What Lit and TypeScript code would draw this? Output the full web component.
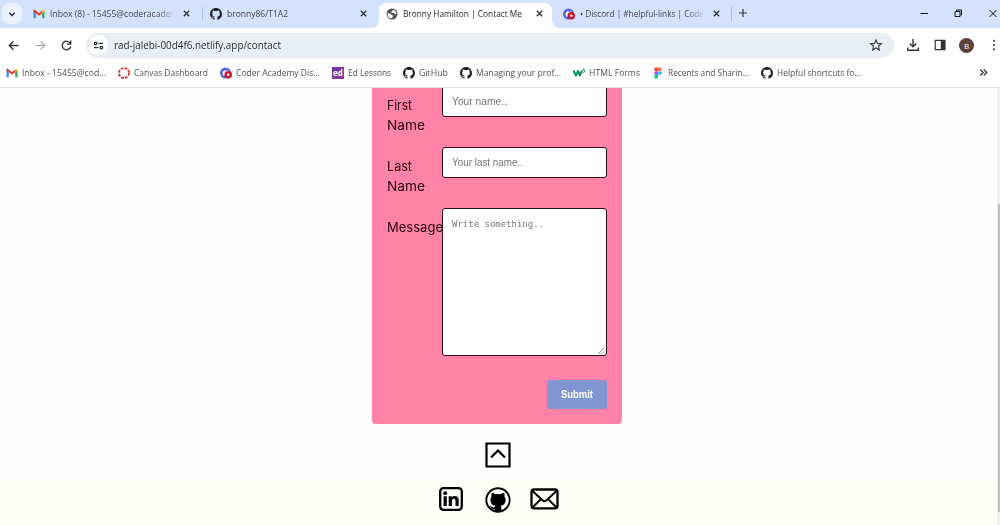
import { LitElement, html, css, svg } from "lit";
import { customElement, property } from "lit/decorators.js";

/** One line of text condensed or widened to a given width. */
@customElement("fit-text")
class FitText extends LitElement {
  @property({ type: Number }) w = 50;
  static styles = css`
    :host { display: block; flex: none; white-space: pre; }
    span { display: inline-block; transform-origin: 0 50%; }
  `;
  firstUpdated() {
    this.fit();
    document.fonts?.ready.then(() => this.fit());
  }
  fit() {
    const s = this.renderRoot.querySelector("span") as HTMLElement;
    this.style.width = `${this.w}px`;
    if (s.offsetWidth) {
      s.style.transform = "none";
      s.style.transform = `scaleX(${this.w / s.getBoundingClientRect().width})`;
    }
  }
  render() {
    return html`<span><slot></slot></span>`;
  }
}

const icon = (box: string, cls: string, body: unknown) =>
  html`<svg class=${cls} viewBox=${box} fill="none">${body}</svg>`;

const gmail = svg`
  <path fill="#4285f4" d="M1 21h4V10L0 6v14q0 1 1 1z"/>
  <path fill="#34a853" d="M19 21h4q1 0 1-1V6l-5 4z"/>
  <path fill="#fbbc04" d="M19 5v5.500l5-3.800V5.500c0-2-2.500-3.200-4-2z"/>
  <path fill="#ea4335" d="M5 10.500V4.500l7 5.200 7-5.200v6L12 16z"/>
  <path fill="#c5221f" d="M0 5.500v1.200l5 3.800V4.500L4 3.500C2.500 2.300 0 3.500 0 5.500z"/>`;
const octo = svg`<path fill="#1f2328" d="M8 0C3.580 0 0 3.580 0 8c0 3.540 2.290 6.530 5.470 7.590.4.070.55-.17.55-.38 0-.19-.01-.82-.01-1.490-2.010.37-2.530-.49-2.690-.94-.09-.23-.48-.94-.82-1.130-.28-.15-.68-.52-.01-.53.63-.01 1.080.58 1.230.82.72 1.210 1.870.87 2.330.66.07-.52.28-.87.51-1.070-1.780-.2-3.640-.89-3.640-3.950 0-.87.31-1.590.82-2.150-.08-.2-.36-1.020.08-2.120 0 0 .67-.21 2.200.82.64-.18 1.320-.27 2-.27s1.360.09 2 .27c1.530-1.040 2.200-.82 2.200-.82.44 1.100.16 1.920.08 2.120.51.56.82 1.270.82 2.150 0 3.070-1.870 3.750-3.650 3.950.29.25.54.73.54 1.480 0 1.070-.01 1.930-.01 2.200 0 .21.15.46.55.38A8.010 8.010 0 0 0 16 8c0-4.420-3.580-8-8-8z"/>`;
const canvas = svg`<circle cx="12" cy="12" r="10" stroke="#d42b20" stroke-width="3.600" stroke-dasharray="5.400 2.454"/>`;
const discord = svg`
  <circle cx="11" cy="12" r="11" fill="#5562ea"/>
  <path fill="#fff" d="M5 14c0-5 2-7 4.500-7.500L11 7.500h3L16 6.500l2 2-6 8-5 1z"/>
  <circle cx="16.500" cy="15.500" r="7.500" fill="#d3122b"/>
  <circle cx="16.500" cy="15.500" r="2.600" fill="#fff"/>`;
const ed = html`<span class="ed">ed</span>`;
const w3 = svg`
  <path stroke="#05925c" stroke-width="4" stroke-linejoin="round" d="M1 7l5 10 4-9 4 9 4-10"/>
  <path stroke="#05925c" stroke-width="1.800" d="M19 4h4l-2 3q3 0 2 3t-4 0"/>`;
const figma = svg`
  <path fill="#f24e1e" d="M12 1H8a3.700 3.700 0 0 0 0 7.400h4z"/>
  <path fill="#ff7262" d="M12 1h4a3.700 3.700 0 0 1 0 7.400h-4z"/>
  <path fill="#a259ff" d="M12 8.400H8a3.700 3.700 0 0 0 0 7.400h4z"/>
  <circle cx="15.800" cy="12.100" r="3.700" fill="#1abcfe"/>
  <path fill="#0acf83" d="M8 15.800h4v3.600a3.800 3.800 0 1 1-4-3.600z"/>`;
const globe = svg`
  <circle cx="12" cy="12" r="11" fill="#50545a"/>
  <path fill="#fff" d="M3 10.500l6 .5 2 3 3 1-1 4-3 2C5 20 2.500 16 3 10.500zM13 3.300c3 .3 5.500 2 7 4.700l.8 5-3-.5-2-3-4 .5-1.500-3 3-.5z"/>`;
const cross = icon("0 0 10 10", "close", svg`<path d="M2 2l6 6M8 2l-6 6" stroke="#2b2e33" stroke-width="1.350"/>`);

const tabs = [
  { box: "-1 -1 26 26", art: gmail, text: "Inbox (8) - 15455@coderacader", w: 124, fade: true },
  { box: "0 0 16 16", art: octo, text: "bronny86/T1A2", w: 61 },
  { box: "0 0 24 24", art: globe, text: "Bronny Hamilton | Contact Me", w: 119, active: true },
  { box: "0 0 24 24", art: discord, text: "• Discord | #helpful-links | Code", w: 124, fade: true },
];

const bookmarks = [
  { box: "-1 -1 26 26", art: gmail, text: "Inbox - 15455@cod...", w: 84 },
  { box: "0 0 24 24", art: canvas, text: "Canvas Dashboard", w: 74 },
  { box: "0 0 24 24", art: discord, text: "Coder Academy Dis...", w: 84 },
  { box: "", art: ed, text: "Ed Lessons", w: 43 },
  { box: "0 0 16 16", art: octo, text: "GitHub", w: 29 },
  { box: "0 0 16 16", art: octo, text: "Managing your prof...", w: 85 },
  { box: "0 0 24 24", art: w3, text: "HTML Forms", w: 51 },
  { box: "0 0 24 24", art: figma, text: "Recents and Sharin...", w: 81 },
  { box: "0 0 16 16", art: octo, text: "Helpful shortcuts fo...", w: 84 },
];

@customElement("app-root")
class AppRoot extends LitElement {
  static styles = css`
    :host { display: block; height: 525px; }
    * { box-sizing: border-box; }
    svg { display: block; flex: none; }
    .window { display: flex; flex-direction: column; width: 1000px; height: 525px; overflow: hidden; background: #fff; font: 9.400px/14px "Open Sans", "Noto Sans", sans-serif; color: #2c2f33; }

    .strip { display: flex; height: 28px; background: #d3e3fd; padding-left: 2px; }
    .search { width: 20px; height: 21px; margin: 3px 4px 0 0; border-radius: 7px; background: #e9f1fe; display: grid; place-items: center; }
    .chev { width: 8px; height: 8px; }
    .tab { position: relative; width: 176.500px; height: 28px; padding: 0 0 1px 7px; display: flex; align-items: center; gap: 5px; }
    .fav { width: 12px; height: 12px; }
    .title { width: 127px; flex: none; overflow: hidden; color: #43474e; }
    .fade { mask-image: linear-gradient(90deg, #000 84%, transparent 99%); }
    .close { width: 9px; height: 9px; }
    .split { border-right: 1px solid transparent; border-image: linear-gradient(transparent 27%, #a9c3f0 27%, #a9c3f0 72%, transparent 72%) 1; }
    .active { background: #fff; border-radius: 7px 7px 0 0; height: 25px; margin: 3px 3.500px 0 0; padding-bottom: 4px; width: 173px; }
    .active .title { color: #24272b; }
    .active::before, .active::after { content: ""; position: absolute; bottom: 0; width: 7px; height: 7px; }
    .active::before { left: -7px; background: radial-gradient(circle at 0 0, transparent 6.500px, #fff 7px); }
    .active::after { right: -7px; background: radial-gradient(circle at 100% 0, transparent 6.500px, #fff 7px); }
    .plus { width: 10px; height: 10px; margin: 8px 0 0 5.500px; }
    .controls { margin: 8px 2px 0 auto; display: flex; gap: 24.500px; }
    .ctl { width: 10px; height: 10px; }

    .toolbar { display: flex; align-items: center; height: 34px; padding: 0 2px 0 7px; }
    .nav { width: 13px; height: 13px; margin-right: 13.500px; }
    .pill { width: 808px; height: 25px; margin-left: -.500px; border-radius: 13px; background: #e9edf6; display: flex; align-items: center; padding: 0 11px 0 2px; font-size: 10.700px; }
    .site { width: 20px; height: 20px; margin-right: 6px; border-radius: 50%; background: #fff; display: grid; place-items: center; }
    .tune { width: 11px; height: 11px; }
    .star { width: 14px; height: 14px; margin-left: auto; }
    .actions { display: flex; align-items: center; gap: 12.500px; margin-left: 12px; }
    .act { width: 14px; height: 14px; }
    .avatar { width: 15px; height: 15px; border-radius: 50%; background: #5d4037; color: #fff; font-size: 8px; line-height: 15px; text-align: center; }
    .dots { width: 4px; height: 12px; margin-left: 5px; }

    .marks { display: flex; height: 26px; padding: 0 12px 4px 6px; gap: 12px; align-items: center; border-bottom: 1px solid #dfe1e6; }
    .mark { display: flex; align-items: center; gap: 4px; color: #4c5055; }
    .ed { width: 12px; height: 12px; flex: none; background: linear-gradient(135deg, #6938a8, #9a329b); color: #fff; font: bold 8px/11px "Open Sans", sans-serif; text-align: center; }
    .more { width: 9px; height: 9px; margin-left: auto; }

    .view { flex: 1; min-height: 0; display: flex; overflow: hidden; }
    .page { flex: 1; min-width: 0; display: flex; flex-direction: column; align-items: center; padding-right: 3px; background: #fefefe; }
    .form { flex: none; width: 250px; height: 353px; margin: -17px 0 0; padding: 15px; border-radius: 4px; background: #ff82a7; display: grid; grid-template-columns: 55px 165px; grid-template-rows: 61px 61px 172px 29px; }
    .label { padding-top: 10px; font: 13px/19.500px Inter, "Open Sans", sans-serif; color: #24060f; }
    .field { height: 31px; padding: 0 9px; border: 1px solid #2b1019; border-radius: 3px; background: #fff; font: 10px/29px "Liberation Sans", Arial, sans-serif; color: #757575; }
    .area { height: 148px; padding-top: 8px; font: 9px/14px "DejaVu Sans Mono", monospace; display: flex; justify-content: space-between; padding-right: 1px; }
    .grip { width: 8px; height: 8px; align-self: flex-end; }
    .submit { grid-column: 2; justify-self: end; width: 60px; height: 29px; border: 0; padding: 1px 0 0 14px; border-radius: 3px; background: #8095d2; color: #fff; font: bold 10px/28px "Liberation Sans", Arial, sans-serif; }
    .up { width: 26px; height: 26px; margin: 18px 0 11px 1px; flex: none; }
    .footer { align-self: stretch; margin-right: -3px; padding: 7px 0 0 1px; flex: 1; background: #fffffa; display: flex; justify-content: center; gap: 19px; align-items: flex-start; }
    .in { width: 26px; height: 26px; }
    .hub { width: 28px; height: 28px; margin-left: 1px; }
    .mail { width: 31px; height: 26px; margin-left: -2px; }
    .scroll { width: 3px; background: #f1f1f1; padding: 116px 0 0 1px; }
    .thumb { height: 308px; background: #c1c1c1; }
  `;

  render() {
    return html`
      <div class="window">
        <div class="strip">
          <div class="search">${icon("0 0 8 8", "chev", svg`<path d="M1.300 2.700L4 5.400l2.700-2.700" stroke="#202328" stroke-width="1.400"/>`)}</div>
          ${tabs.map(
            (t, i) => html`<div class="tab ${t.active ? "active" : ""} ${i === 0 || i === 3 ? "split" : ""}">
              ${icon(t.box, "fav", t.art)}
              <div class="title ${t.fade ? "fade" : ""}"><fit-text .w=${t.w}>${t.text}</fit-text></div>
              ${cross}
            </div>`
          )}
          ${icon("0 0 10 10", "plus", svg`<path d="M5 1v8M1 5h8" stroke="#33363b" stroke-width="1.200"/>`)}
          <div class="controls">
            ${icon("0 0 10 10", "ctl", svg`<path d="M1.500 5.500h7.500" stroke="#111" />`)}
            ${icon("0 0 10 10", "ctl", svg`<path d="M1 3.500h5v5H1zM2.500 3V2h5v5H6.500" stroke="#111"/>`)}
            ${icon("0 0 10 10", "ctl", svg`<path d="M1.500 2l7 7M8.500 2l-7 7" stroke="#111"/>`)}
          </div>
        </div>
        <div class="toolbar">
          ${icon("0 0 13 13", "nav", svg`<path d="M11.500 6.500H2.500M6.500 2.300L2.300 6.500l4.200 4.200" stroke="#303338" stroke-width="1.300"/>`)}
          ${icon("0 0 13 13", "nav", svg`<path d="M1.500 6.500h9M6.500 2.300l4.200 4.200-4.200 4.200" stroke="#a5a7aa" stroke-width="1.200"/>`)}
          ${icon("0 0 13 13", "nav", svg`<path d="M10.300 4.500A4.300 4.300 0 1 0 10.700 7.500M10.700 1.500v3.600H7.100" stroke="#303338" stroke-width="1.300"/>`)}
          <div class="pill">
            <div class="site">${icon("0 0 11 11", "tune", svg`<g stroke="#2c2f33" stroke-width="1.300"><circle cx="2.600" cy="3.400" r="1.200"/><path d="M5.500 3.400h4.500M1 7.600h4.500"/><circle cx="8.400" cy="7.600" r="1.200"/></g>`)}</div>
            <fit-text .w=${167}>rad-jalebi-00d4f6.netlify.app/contact</fit-text>
            ${icon("0 0 24 24", "star", svg`<path d="M12 3.200l2.600 6.100 6.600.6-5 4.300 1.500 6.500-5.700-3.500-5.700 3.500 1.500-6.500-5-4.300 6.600-.6z" stroke="#3c4045" stroke-width="2"/>`)}
          </div>
          <div class="actions">
            ${icon("0 0 14 14", "act", svg`<path d="M7 1v7.500M3.700 5.500L7 8.800l3.300-3.300M1.700 9.500v2.700h10.600V9.500" stroke="#303338" stroke-width="1.400"/>`)}
            ${icon("0 0 14 14", "act", svg`<path d="M2.200 2.400h9.600v9.200H2.200z" stroke="#303338" stroke-width="1.200"/><path d="M7.800 2h4.500v10H7.800z" fill="#303338"/>`)}
            <div class="avatar">B</div>
            ${icon("0 0 4 12", "dots", svg`<g fill="#303338"><circle cx="2" cy="1.800" r="1"/><circle cx="2" cy="6" r="1"/><circle cx="2" cy="10.200" r="1"/></g>`)}
          </div>
        </div>
        <div class="marks">
          ${bookmarks.map(
            (b) => html`<div class="mark">${b.box ? icon(b.box, "fav", b.art) : b.art}<fit-text .w=${b.w}>${b.text}</fit-text></div>`
          )}
          ${icon("0 0 9 9", "more", svg`<path d="M1.200 1.500l3 3-3 3M4.700 1.500l3 3-3 3" stroke="#303338" stroke-width="1.200"/>`)}
        </div>
        <div class="view">
          <div class="page">
            <div class="form">
              <div class="label"><fit-text .w=${25}>First</fit-text><fit-text .w=${38}>Name</fit-text></div>
              <div class="field"><fit-text .w=${55}>Your name..</fit-text></div>
              <div class="label"><fit-text .w=${25}>Last</fit-text><fit-text .w=${38}>Name</fit-text></div>
              <div class="field"><fit-text .w=${71}>Your last name..</fit-text></div>
              <div class="label"><fit-text .w=${56}>Message</fit-text></div>
              <div class="field area">
                <fit-text .w=${92}>Write something..</fit-text>
                ${icon("0 0 8 8", "grip", svg`<path d="M1 7l6-6M4.500 7L7 4.500" stroke="#777" stroke-width=".8"/>`)}
              </div>
              <button class="submit"><fit-text .w=${32}>Submit</fit-text></button>
            </div>
            ${icon("0 0 26 26", "up", svg`<path d="M1.500 1.500h23v23h-23z" stroke="#000" stroke-width="2.200"/><path d="M6 15.500l7-7 7 7" stroke="#000" stroke-width="2.200"/>`)}
            <div class="footer">
              ${icon("0 0 26 26", "in", svg`<rect x="2.200" y="2.200" width="21.600" height="21.600" rx="3.200" stroke="#000" stroke-width="2.300"/><path fill="#000" d="M5.600 10.200h3.200V20H5.600zM10.700 10.200h3v1.300c2-2.500 7-1.900 7 2.400V20h-3.200v-5.200c0-2.800-3.600-2.600-3.600 0V20h-3.200z"/><circle cx="7.200" cy="7.200" r="1.900" fill="#000"/>`)}
              ${icon("0 0 28 28", "hub", svg`<circle cx="14" cy="14" r="11.700" stroke="#000" stroke-width="1.900"/><path fill="#000" d="M7.800 6.800c1.500.1 2.700.7 3.700 1.400q2.500-.5 5 0c1-.7 2.200-1.300 3.700-1.400.5 1.400.5 2.400.2 3.500 2.600 3.800 1 8.800-3.700 9.400.5.700.7 1.400.7 2.200v3.600h-6.600v-2.200c-3.600.5-3.800-2.500-5.800-3.200 2.800-.6 3.100 1.900 5.800 1.200q0-.9.500-1.600c-4.700-.6-6.300-5.600-3.700-9.400-.3-1.100-.3-2.100.2-3.500z"/>`)}
              ${icon("0 0 31 26", "mail", svg`<rect x="2.500" y="3.500" width="26" height="18.800" rx="2.500" stroke="#000" stroke-width="2.300"/><path d="M3.500 5l10 9.300q2 1.800 4 0l10-9.300M3.500 21.500l8.500-8.500M27.500 21.500L19 13" stroke="#000" stroke-width="1.900"/>`)}
            </div>
          </div>
          <div class="scroll"><div class="thumb"></div></div>
        </div>
      </div>
    `;
  }
}
